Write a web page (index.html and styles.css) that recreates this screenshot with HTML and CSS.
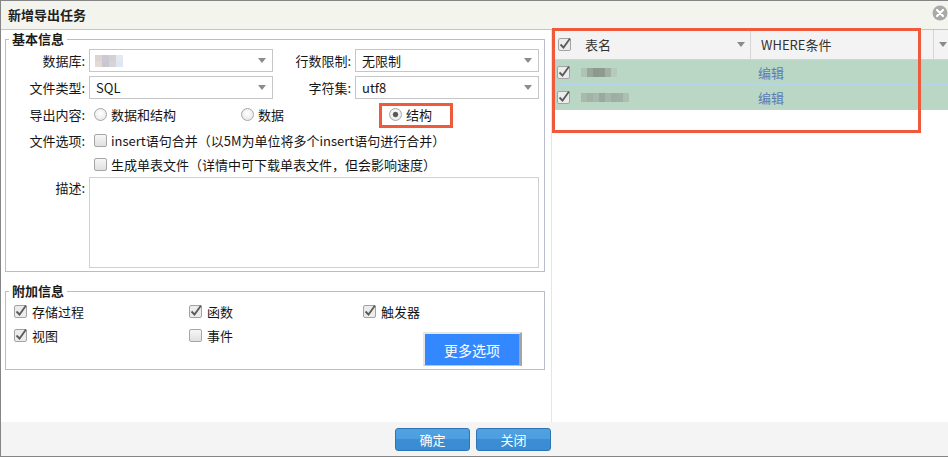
FILE: index.html
```html
<!DOCTYPE html>
<html lang="zh-CN">
<head>
<meta charset="utf-8">
<title>新增导出任务</title>
<link rel="stylesheet" href="styles.css">
</head>
<body>
<div class="dialog">
  <div class="titlebar">
    <span class="title">新增导出任务</span>
    <svg class="close" width="16" height="16" viewBox="0 0 16 16"><circle cx="8" cy="8" r="7.5" fill="#a9a9a9"/><path d="M5 5 L11 11 M11 5 L5 11" stroke="#fff" stroke-width="2.2" stroke-linecap="round"/></svg>
  </div>
  <div class="body">
    <div class="left">
      <fieldset class="fs fs-basic">
        <legend>基本信息</legend>
        <div class="form">
          <div class="row row-sel">
            <span class="lbl">数据库:</span>
            <div class="select"><span class="blur-sel"><i class="b1"></i><i class="b2"></i><i class="b3"></i><i class="b4"></i><i class="b5"></i><i class="b6"></i><i class="b7"></i><i class="b8"></i></span><span class="arrow"></span></div>
            <span class="lbl lbl2">行数限制:</span>
            <div class="select"><span>无限制</span><span class="arrow"></span></div>
          </div>
          <div class="row row-sel row-2">
            <span class="lbl">文件类型:</span>
            <div class="select"><span>SQL</span><span class="arrow"></span></div>
            <span class="lbl lbl2">字符集:</span>
            <div class="select"><span>utf8</span><span class="arrow"></span></div>
          </div>
          <div class="row row-opt row-3">
            <span class="lbl">导出内容:</span>
            <div class="opt ri1"><span class="radio"></span><span>数据和结构</span></div>
            <div class="opt ri2"><span class="radio"></span><span>数据</span></div>
            <div class="opt ri3"><span class="radio on"></span><span>结构</span><span class="mark mark-radio"></span></div>
          </div>
          <div class="row row-opt row-4">
            <span class="lbl">文件选项:</span>
            <div class="opt"><span class="cb"></span><span>insert语句合并（以5M为单位将多个insert语句进行合并）</span></div>
          </div>
          <div class="row row-opt row-5">
            <span class="lbl"></span>
            <div class="opt"><span class="cb"></span><span>生成单表文件（详情中可下载单表文件，但会影响速度）</span></div>
          </div>
          <div class="row row-desc">
            <span class="lbl lbl-desc">描述:</span>
            <div class="textarea"></div>
          </div>
        </div>
      </fieldset>
      <fieldset class="fs fs-extra">
        <legend>附加信息</legend>
        <div class="extra">
          <div class="cell"><svg class="ck" width="13" height="13" viewBox="0 0 13 13"><rect x="0.5" y="0.5" width="12" height="12" rx="1.5" fill="#ececec" stroke="#a3a3a3"/><path d="M2.5 6.5 L5.5 9.5 L12 0.5" fill="none" stroke="#5a5a5a" stroke-width="1.8"/></svg><span>存储过程</span></div>
          <div class="cell"><svg class="ck" width="13" height="13" viewBox="0 0 13 13"><rect x="0.5" y="0.5" width="12" height="12" rx="1.5" fill="#ececec" stroke="#a3a3a3"/><path d="M2.5 6.5 L5.5 9.5 L12 0.5" fill="none" stroke="#5a5a5a" stroke-width="1.8"/></svg><span>函数</span></div>
          <div class="cell"><svg class="ck" width="13" height="13" viewBox="0 0 13 13"><rect x="0.5" y="0.5" width="12" height="12" rx="1.5" fill="#ececec" stroke="#a3a3a3"/><path d="M2.5 6.5 L5.5 9.5 L12 0.5" fill="none" stroke="#5a5a5a" stroke-width="1.8"/></svg><span>触发器</span></div>
          <div class="cell"><svg class="ck" width="13" height="13" viewBox="0 0 13 13"><rect x="0.5" y="0.5" width="12" height="12" rx="1.5" fill="#ececec" stroke="#a3a3a3"/><path d="M2.5 6.5 L5.5 9.5 L12 0.5" fill="none" stroke="#5a5a5a" stroke-width="1.8"/></svg><span>视图</span></div>
          <div class="cell"><span class="cb"></span><span>事件</span></div>
          <div class="more-cell"><div class="more">更多选项</div></div>
        </div>
      </fieldset>
    </div>
    <div class="right">
      <div class="ghead">
        <div class="gcol1"><svg class="ck" width="13" height="13" viewBox="0 0 13 13"><rect x="0.5" y="0.5" width="12" height="12" rx="1.5" fill="#ececec" stroke="#a3a3a3"/><path d="M2.5 6.5 L5.5 9.5 L12 0.5" fill="none" stroke="#5a5a5a" stroke-width="1.8"/></svg><span class="htext">表名</span><span class="harrow"></span></div>
        <div class="gcol2"><span>WHERE条件</span></div>
        <div class="gcol3"><span class="harrow"></span></div>
      </div>
      <div class="grow">
        <div class="gcell1"><svg class="ck" width="13" height="13" viewBox="0 0 13 13"><rect x="0.5" y="0.5" width="12" height="12" rx="1.5" fill="#ececec" stroke="#a3a3a3"/><path d="M2.5 6.5 L5.5 9.5 L12 0.5" fill="none" stroke="#5a5a5a" stroke-width="1.8"/></svg><span class="blur blur1"><i></i><i></i><i></i><i></i><i></i><i></i></span></div>
        <div class="gcell2"><span class="link">编辑</span></div>
      </div>
      <div class="grow">
        <div class="gcell1"><svg class="ck" width="13" height="13" viewBox="0 0 13 13"><rect x="0.5" y="0.5" width="12" height="12" rx="1.5" fill="#ececec" stroke="#a3a3a3"/><path d="M2.5 6.5 L5.5 9.5 L12 0.5" fill="none" stroke="#5a5a5a" stroke-width="1.8"/></svg><span class="blur blur2"><i></i><i></i><i></i><i></i><i></i><i></i><i></i><i></i></span></div>
        <div class="gcell2"><span class="link">编辑</span></div>
      </div>
      <span class="mark mark-grid"></span>
    </div>
  </div>
  <div class="footer">
    <div class="btn">确定</div>
    <div class="btn">关闭</div>
  </div>
</div>
</body>
</html>
```
FILE: styles.css
```css
html, body {
  margin: 0;
  padding: 0;
  background: #fff;
}
body {
  font-family: "Noto Sans CJK SC", "Noto Sans", sans-serif;
  font-size: 13px;
  color: #151515;
}
.dialog {
  width: 948px;
  height: 457px;
  box-sizing: border-box;
  border: 1px solid #858585;
  border-right: none;
  display: flex;
  flex-direction: column;
  overflow: hidden;
}
.titlebar {
  height: 28px;
  flex: none;
  background: #f4f4ef;
  border-bottom: 1px solid #c4c4c4;
  display: flex;
  justify-content: space-between;
}
.title {
  font-weight: bold;
  line-height: 28px;
  padding-left: 7px;
  color: #222;
}
.close {
  margin-top: 4px;
  flex: none;
}
.body {
  flex: 1;
  display: flex;
  min-height: 0;
}
.left {
  width: 551px;
  flex: none;
  box-sizing: border-box;
  border-right: 1px solid #e6e6e6;
  padding: 0 6px 0 4px;
}
.right {
  flex: 1;
  position: relative;
}
.footer {
  height: 34px;
  flex: none;
  background: #f4f4f4;
  display: flex;
  align-items: center;
  gap: 6px;
  padding-left: 394px;
}

/* fieldsets */
.fs {
  margin: 1px 0 0;
  padding: 0 0 3px;
  border: 1px solid #b9bccb;
  min-width: 0;
}
.fs legend {
  font-weight: bold;
  line-height: 16px;
  padding: 0 3px;
  margin-left: 3px;
  color: #1a1a1a;
}
.fs-extra {
  margin-top: 11px;
}
.form {
  padding-top: 2px;
  display: flex;
  flex-direction: column;
}
.row {
  display: flex;
  align-items: center;
}
.row-sel { height: 23px; }
.row-2 { margin-top: 4px; }
.row-opt { height: 24px; }
.row-3 { margin-top: 3px; }
.row-4 { margin-top: 2px; }
.row-5 { margin-top: 0; }
.row-desc {
  margin-top: 1px;
  align-items: flex-start;
}
.lbl {
  width: 83px;
  flex: none;
  box-sizing: border-box;
  padding-right: 4px;
  text-align: right;
  white-space: nowrap;
}
.lbl2 { width: 82px; }
.lbl-desc {
  line-height: 20px;
  margin-top: 1px;
}
.select {
  width: 184px;
  height: 23px;
  flex: none;
  box-sizing: border-box;
  border: 1px solid #c6c6c6;
  background: #fff;
  display: flex;
  align-items: center;
  justify-content: space-between;
  padding: 0 6px 0 6px;
}
.arrow {
  width: 0;
  height: 0;
  border-left: 4.5px solid transparent;
  border-right: 4.5px solid transparent;
  border-top: 5px solid #8c8c8c;
}
.blur-sel {
  display: grid;
  grid-template-columns: repeat(4, 7px);
  grid-template-rows: 6px 6px;
  margin-left: -1px;
}
.blur-sel i { display: block; }
.b1 { background: #ddd3d3; }
.b2 { background: #cdc9d2; }
.b3 { background: #d5cfd6; }
.b4 { background: #e4e9f1; }
.b5 { background: #e3d9d7; }
.b6 { background: #c9c8d1; }
.b7 { background: #d8d2d9; }
.b8 { background: #e1e7f0; }

.opt {
  display: flex;
  align-items: center;
  gap: 4px;
  padding-left: 5px;
  box-sizing: border-box;
  white-space: nowrap;
}
.ri1 { width: 147px; }
.ri2 { width: 148px; }
.ri3 { position: relative; }
.radio {
  width: 13px;
  height: 13px;
  flex: none;
  box-sizing: border-box;
  border: 1px solid #a6a6a6;
  border-radius: 50%;
  background: radial-gradient(circle at 50% 40%, #ffffff, #e3e3e3);
}
.radio.on {
  background:
    radial-gradient(circle, #555 0, #555 2px, #888 2.6px, transparent 3.2px),
    radial-gradient(circle at 50% 40%, #ffffff, #e3e3e3);
}
.cb {
  width: 13px;
  height: 13px;
  flex: none;
  box-sizing: border-box;
  border: 1px solid #a6a6a6;
  border-radius: 2px;
  background: linear-gradient(#f6f6f6, #e0e0e0);
}
.ck {
  flex: none;
  overflow: visible;
}
.mark {
  position: absolute;
  box-sizing: border-box;
  border: 3px solid #f05a3c;
  pointer-events: none;
}
.mark-radio {
  left: -5px;
  top: -2px;
  width: 74px;
  height: 25px;
}
.mark-grid {
  left: 0;
  top: -2px;
  width: 369px;
  height: 105px;
}
.textarea {
  width: 450px;
  height: 91px;
  box-sizing: border-box;
  border: 1px solid #cdd1d6;
  background: #fff;
}

/* extra info */
.extra {
  display: grid;
  grid-template-columns: 175px 174px 1fr;
  grid-template-rows: 24px auto;
  padding: 0 0 0 8px;
}
.cell {
  display: flex;
  align-items: center;
  gap: 5px;
  height: 24px;
  align-self: start;
}
.more-cell {
  grid-column: 3;
  grid-row: 2;
}
.more {
  margin: 9px 0 0 60px;
  width: 99px;
  height: 34px;
  box-sizing: border-box;
  background: #3388ff;
  color: #fff;
  font-size: 14px;
  border-style: solid;
  border-width: 2px 3px 1px 2px;
  border-color: #e6e6e6 #a4a4a4 #c4c4c4 #e6e6e6;
  display: flex;
  align-items: center;
  justify-content: center;
}

/* grid */
.ghead {
  height: 29px;
  background: #f3f3f3;
  border-bottom: 1px solid #d3d3d3;
  display: flex;
}
.gcol1 {
  width: 199px;
  flex: none;
  box-sizing: border-box;
  border-right: 1px solid #d6d6d6;
  display: flex;
  align-items: center;
  padding: 0 5px 0 6px;
}
.htext {
  margin-left: 14px;
  color: #333;
}
.harrow {
  width: 0;
  height: 0;
  border-left: 4px solid transparent;
  border-right: 4px solid transparent;
  border-top: 5px solid #8a8a8a;
}
.gcol1 .harrow { margin-left: auto; }
.gcol2 {
  width: 183px;
  flex: none;
  box-sizing: border-box;
  border-right: 1px solid #d6d6d6;
  display: flex;
  align-items: center;
  padding-left: 10px;
  color: #333;
}
.gcol3 {
  flex: 1;
  display: flex;
  align-items: center;
  padding-left: 5px;
}
.grow {
  height: 24px;
  border-bottom: 1px solid #b3d6ec;
  background: #bad6c4;
  display: flex;
  align-items: center;
}
.gcell1 {
  width: 199px;
  flex: none;
  box-sizing: border-box;
  display: flex;
  align-items: center;
  padding-left: 5px;
}
.gcell2 {
  padding-left: 7px;
}
.link {
  color: #5b7cb6;
}
.blur {
  display: flex;
  margin-left: 11px;
  height: 9px;
}
.blur i {
  display: block;
  width: 6px;
  height: 9px;
}
.blur1 i:nth-child(1) { background: #b0c4b6; }
.blur1 i:nth-child(2) { background: #98a79c; }
.blur1 i:nth-child(3) { background: #8d998f; }
.blur1 i:nth-child(4) { background: #8f9b91; }
.blur1 i:nth-child(5) { background: #a2b1a6; }
.blur1 i:nth-child(6) { background: #b4cabb; }
.blur2 i:nth-child(1) { background: #a9baad; }
.blur2 i:nth-child(2) { background: #a2b2a6; }
.blur2 i:nth-child(3) { background: #a8b8ac; }
.blur2 i:nth-child(4) { background: #9aa99e; }
.blur2 i:nth-child(5) { background: #a6b6aa; }
.blur2 i:nth-child(6) { background: #9faea3; }
.blur2 i:nth-child(7) { background: #a0b0a4; }
.blur2 i:nth-child(8) { background: #adbfb1; }

.btn {
  width: 75px;
  height: 23px;
  box-sizing: border-box;
  border: 1px solid #2f75b5;
  border-radius: 3px;
  background: linear-gradient(#50a2e2 0, #4b9ee0 50%, #3b8ed3 50%, #3a8cd2 100%);
  color: #fff;
  font-size: 13px;
  display: flex;
  align-items: center;
  justify-content: center;
}
```
